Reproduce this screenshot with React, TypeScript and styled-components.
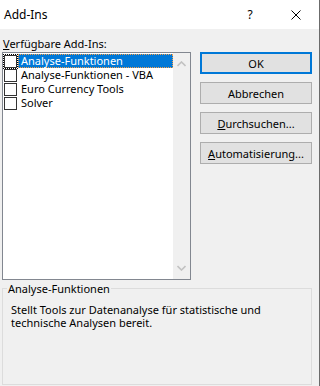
import React from "react";
import styled, { createGlobalStyle } from "styled-components";

const GlobalStyle = createGlobalStyle`
  html, body {
    margin: 0;
    padding: 0;
    background: #f0f0f0;
  }
  body {
    font-family: "Noto Sans", "Open Sans", Arial, sans-serif;
    font-size: 11px;
    color: #000;
  }
`;

const addIns = [
  "Analyse-Funktionen",
  "Analyse-Funktionen - VBA",
  "Euro Currency Tools",
  "Solver",
];

const App = () => {
  return (
    <Window>
      <GlobalStyle />
      <TitleBar>
        <Title>Add-Ins</Title>
        <TitleButton>?</TitleButton>
        <TitleButton>
          <svg width="10" height="10" viewBox="0 0 10 10">
            <path d="M0.5 0.5 L9.5 9.5 M9.5 0.5 L0.5 9.5" stroke="#000" strokeWidth="1" fill="none" />
          </svg>
        </TitleButton>
      </TitleBar>

      <Content>
        <Main>
          <ListLabel>
            <u>V</u>erfügbare Add-Ins:
          </ListLabel>
          <ListBox>
            <Rows>
              {addIns.map((name, i) => (
                <Row key={name}>
                  <CheckWrap $focus={i === 0}>
                    <Check />
                  </CheckWrap>
                  <ItemText $selected={i === 0}>{name}</ItemText>
                </Row>
              ))}
            </Rows>
            <ScrollBar>
              <svg width="9" height="6" viewBox="0 0 9 6">
                <path d="M0.5 5 L4.5 1 L8.5 5" stroke="#c2c2c2" strokeWidth="1.6" fill="none" />
              </svg>
              <svg width="9" height="6" viewBox="0 0 9 6">
                <path d="M0.5 1 L4.5 5 L8.5 1" stroke="#c2c2c2" strokeWidth="1.6" fill="none" />
              </svg>
            </ScrollBar>
          </ListBox>
          <Buttons>
            <Button $primary>OK</Button>
            <Button>Abbrechen</Button>
            <Button>
              <u>D</u>urchsuchen...
            </Button>
            <Button>
              <u>A</u>utomatisierung...
            </Button>
          </Buttons>
        </Main>

        <Group>
          <Legend>Analyse-Funktionen</Legend>
          <Description>
            Stellt Tools zur Datenanalyse für statistische und technische Analysen bereit.
          </Description>
        </Group>
      </Content>
    </Window>
  );
};

export default App;

const Window = styled.div`
  width: 319px;
  height: 386px;
  border-right: 1px solid #6b6b6b;
  background: #f0f0f0;
  display: flex;
  flex-direction: column;
  overflow: hidden;
`;

const TitleBar = styled.div`
  height: 29px;
  background: #fff;
  display: flex;
  align-items: center;
`;

const Title = styled.div`
  flex: 1;
  padding-left: 4px;
  font-size: 12px;
`;

const TitleButton = styled.div`
  width: 46px;
  height: 29px;
  display: flex;
  align-items: center;
  justify-content: center;
  font-size: 12px;
`;

const Content = styled.div`
  flex: 1;
  padding: 7px 7px 0 2px;
  display: flex;
  flex-direction: column;
`;

const Main = styled.div`
  display: grid;
  grid-template-columns: 189px 112px;
  grid-template-rows: 15px 228px;
  column-gap: 9px;
  row-gap: 1px;
`;

const ListLabel = styled.div`
  grid-column: 1 / 3;
  padding-left: 1px;
  line-height: 15px;
`;

const ListBox = styled.div`
  border: 1px solid #828790;
  background: #fff;
  display: flex;
`;

const Rows = styled.div`
  flex: 1;
  padding: 1px 0 0 1px;
  display: flex;
  flex-direction: column;
`;

const Row = styled.div`
  height: 14px;
  display: flex;
  align-items: center;
`;

const CheckWrap = styled.div<{ $focus?: boolean }>`
  width: 13px;
  height: 13px;
  margin-right: 1px;
  outline: ${(p) => (p.$focus ? "1px dotted #000" : "none")};
  display: flex;
`;

const Check = styled.div`
  width: 11px;
  height: 11px;
  border: 1px solid #333;
  background: #fff;
`;

const ItemText = styled.div<{ $selected?: boolean }>`
  flex: ${(p) => (p.$selected ? 1 : "none")};
  height: 14px;
  line-height: 12px;
  padding-left: 2px;
  box-sizing: border-box;
  white-space: nowrap;
  color: ${(p) => (p.$selected ? "#fff" : "#000")};
  background: ${(p) => (p.$selected ? "#0078d7" : "transparent")};
  border: ${(p) => (p.$selected ? "1px dotted #f7a04a" : "1px solid transparent")};
`;

const ScrollBar = styled.div`
  width: 17px;
  background: #f0f0f0;
  display: flex;
  flex-direction: column;
  justify-content: space-between;
  align-items: center;
  padding: 8px 0 8px;
`;

const Buttons = styled.div`
  display: flex;
  flex-direction: column;
  gap: 8px;
`;

const Button = styled.div<{ $primary?: boolean }>`
  height: 22px;
  box-sizing: border-box;
  background: #e1e1e1;
  border: ${(p) => (p.$primary ? "2px solid #0078d7" : "1px solid #adadad")};
  display: flex;
  align-items: center;
  justify-content: center;
`;

const Group = styled.fieldset`
  margin: 1px 0 0;
  padding: 0;
  height: 104px;
  box-sizing: border-box;
  border: 1px solid #dcdcdc;
  min-width: 0;
`;

const Legend = styled.legend`
  margin-left: 4px;
  padding: 0 1px;
  line-height: 15px;
`;

const Description = styled.div`
  margin-top: 7px;
  padding: 0 8px;
  line-height: 13px;
`;
